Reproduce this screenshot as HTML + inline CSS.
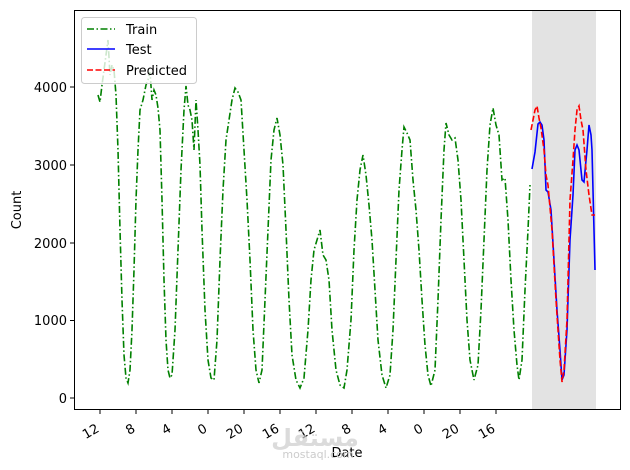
<!DOCTYPE html>
<html><head><style>
body{margin:0;background:#fff;}
svg{display:block;font-family:"DejaVu Sans","Liberation Sans",sans-serif;}
</style></head><body>
<svg width="630" height="470" viewBox="0 0 630 470">
<rect x="532" y="10" width="64" height="399" fill="#e3e3e3"/>
<polyline fill="none" stroke="#008000" stroke-width="1.6" stroke-dasharray="7,2.5,1.5,2.5" points="98,95 100,102 102,85 104,70 106,55 108,40 110,75 112,65 114,70 116,95 118,150 120,230 122,300 124,355 126,378 128,383 130,370 132,330 134,270 136,200 138,150 140,110 143,100 146,85 148,80 150,72 152,100 154,90 156,95 158,108 160,130 162,200 164,280 166,340 168,370 170,378 172,375 175,330 178,250 181,170 184,110 186,86 188,105 190,110 192,120 194,150 196,100 198,130 200,165 202,230 205,310 208,360 211,378 214,380 217,340 220,260 223,190 226,140 229,120 232,100 235,88 238,92 241,100 244,150 247,200 250,260 253,330 256,370 259,383 262,370 265,300 268,230 271,160 274,130 277,118 280,135 283,165 286,230 289,300 292,355 296,380 300,388 304,378 308,330 311,280 314,250 317,240 320,230 323,255 326,260 329,280 332,330 336,370 340,385 344,388 347,370 351,320 354,250 357,200 360,170 363,155 366,175 369,205 372,240 375,290 378,340 382,375 386,388 390,375 393,330 396,260 399,190 402,150 404,127 407,133 410,140 413,180 416,210 419,250 422,300 425,345 428,375 431,386 435,370 438,300 441,220 444,150 446,123 449,135 452,140 455,138 458,160 461,200 464,260 467,320 470,360 474,380 478,365 481,310 484,240 487,170 490,125 493,108 496,125 499,135 502,180 505,178 508,220 511,280 514,330 517,365 519,380 522,360 525,290 528,230 530,185"/>
<polyline fill="none" stroke="#0000ff" stroke-width="1.6" points="532,169 535,152 538,124 540,122 542,125 544,140 546,190 548,192 551,210 554,260 557,310 560,350 562,380 564,375 567,330 570,240 573,195 575,150 577,145 579,150 582,180 584,182 587,150 589,125 591,135 592,150 595,270"/>
<polyline fill="none" stroke="#ff0000" stroke-width="1.6" stroke-dasharray="6,2.5" points="531,130 535,110 537,106 539,118 541,128 544,150 546,175 548,185 552,230 556,300 560,360 562,382 564,370 567,320 570,200 573,160 575,130 577,110 579,106 581,120 583,130 586,170 589,195 592,215 595,215"/>
<rect x="74.5" y="10.5" width="546" height="399" fill="none" stroke="#000" stroke-width="1"/>
<g stroke="#000" stroke-width="1">
<line x1="70" y1="398" x2="74" y2="398"/><line x1="70" y1="320.5" x2="74" y2="320.5"/><line x1="70" y1="243" x2="74" y2="243"/><line x1="70" y1="165" x2="74" y2="165"/><line x1="70" y1="87" x2="74" y2="87"/>
<line x1="100" y1="410" x2="100" y2="414"/><line x1="136" y1="410" x2="136" y2="414"/><line x1="172" y1="410" x2="172" y2="414"/><line x1="208" y1="410" x2="208" y2="414"/><line x1="244" y1="410" x2="244" y2="414"/><line x1="280" y1="410" x2="280" y2="414"/><line x1="316" y1="410" x2="316" y2="414"/><line x1="352" y1="410" x2="352" y2="414"/><line x1="388" y1="410" x2="388" y2="414"/><line x1="424" y1="410" x2="424" y2="414"/><line x1="460" y1="410" x2="460" y2="414"/><line x1="496" y1="410" x2="496" y2="414"/>
</g>
<g font-size="13" fill="#000" text-anchor="end">
<text x="67" y="403">0</text><text x="67" y="325">1000</text><text x="67" y="248">2000</text><text x="67" y="170">3000</text><text x="67" y="92">4000</text>
</g>
<g font-size="13" fill="#000" text-anchor="end">
<text transform="translate(100,431) rotate(-30)">12</text>
<text transform="translate(136,431) rotate(-30)">8</text>
<text transform="translate(172,431) rotate(-30)">4</text>
<text transform="translate(208,431) rotate(-30)">0</text>
<text transform="translate(244,431) rotate(-30)">20</text>
<text transform="translate(280,431) rotate(-30)">16</text>
<text transform="translate(316,431) rotate(-30)">12</text>
<text transform="translate(352,431) rotate(-30)">8</text>
<text transform="translate(388,431) rotate(-30)">4</text>
<text transform="translate(424,431) rotate(-30)">0</text>
<text transform="translate(460,431) rotate(-30)">20</text>
<text transform="translate(496,431) rotate(-30)">16</text>
</g>
<text x="347" y="457" font-size="13" text-anchor="middle">Date</text>
<text transform="translate(21,210) rotate(-90)" font-size="13" text-anchor="middle">Count</text>
<text x="315" y="446" font-size="24" font-weight="bold" fill="#ccc" opacity="0.7" text-anchor="middle">مستقل</text>
<text x="318" y="458" font-size="11" fill="#ccc" text-anchor="middle">mostaql.com</text>
<rect x="81.5" y="17.5" width="115" height="66" rx="3" fill="#fff" fill-opacity="0.8" stroke="#ccc"/>
<line x1="87" y1="29" x2="115" y2="29" stroke="#008000" stroke-width="1.6" stroke-dasharray="7,2.5,1.5,2.5"/>
<line x1="87" y1="49" x2="115" y2="49" stroke="#0000ff" stroke-width="1.6"/>
<line x1="87" y1="70" x2="115" y2="70" stroke="#ff0000" stroke-width="1.6" stroke-dasharray="6,2.5"/>
<g font-size="13" fill="#000"><text x="126" y="34">Train</text><text x="126" y="54">Test</text><text x="126" y="75">Predicted</text></g>
</svg>
</body></html>
